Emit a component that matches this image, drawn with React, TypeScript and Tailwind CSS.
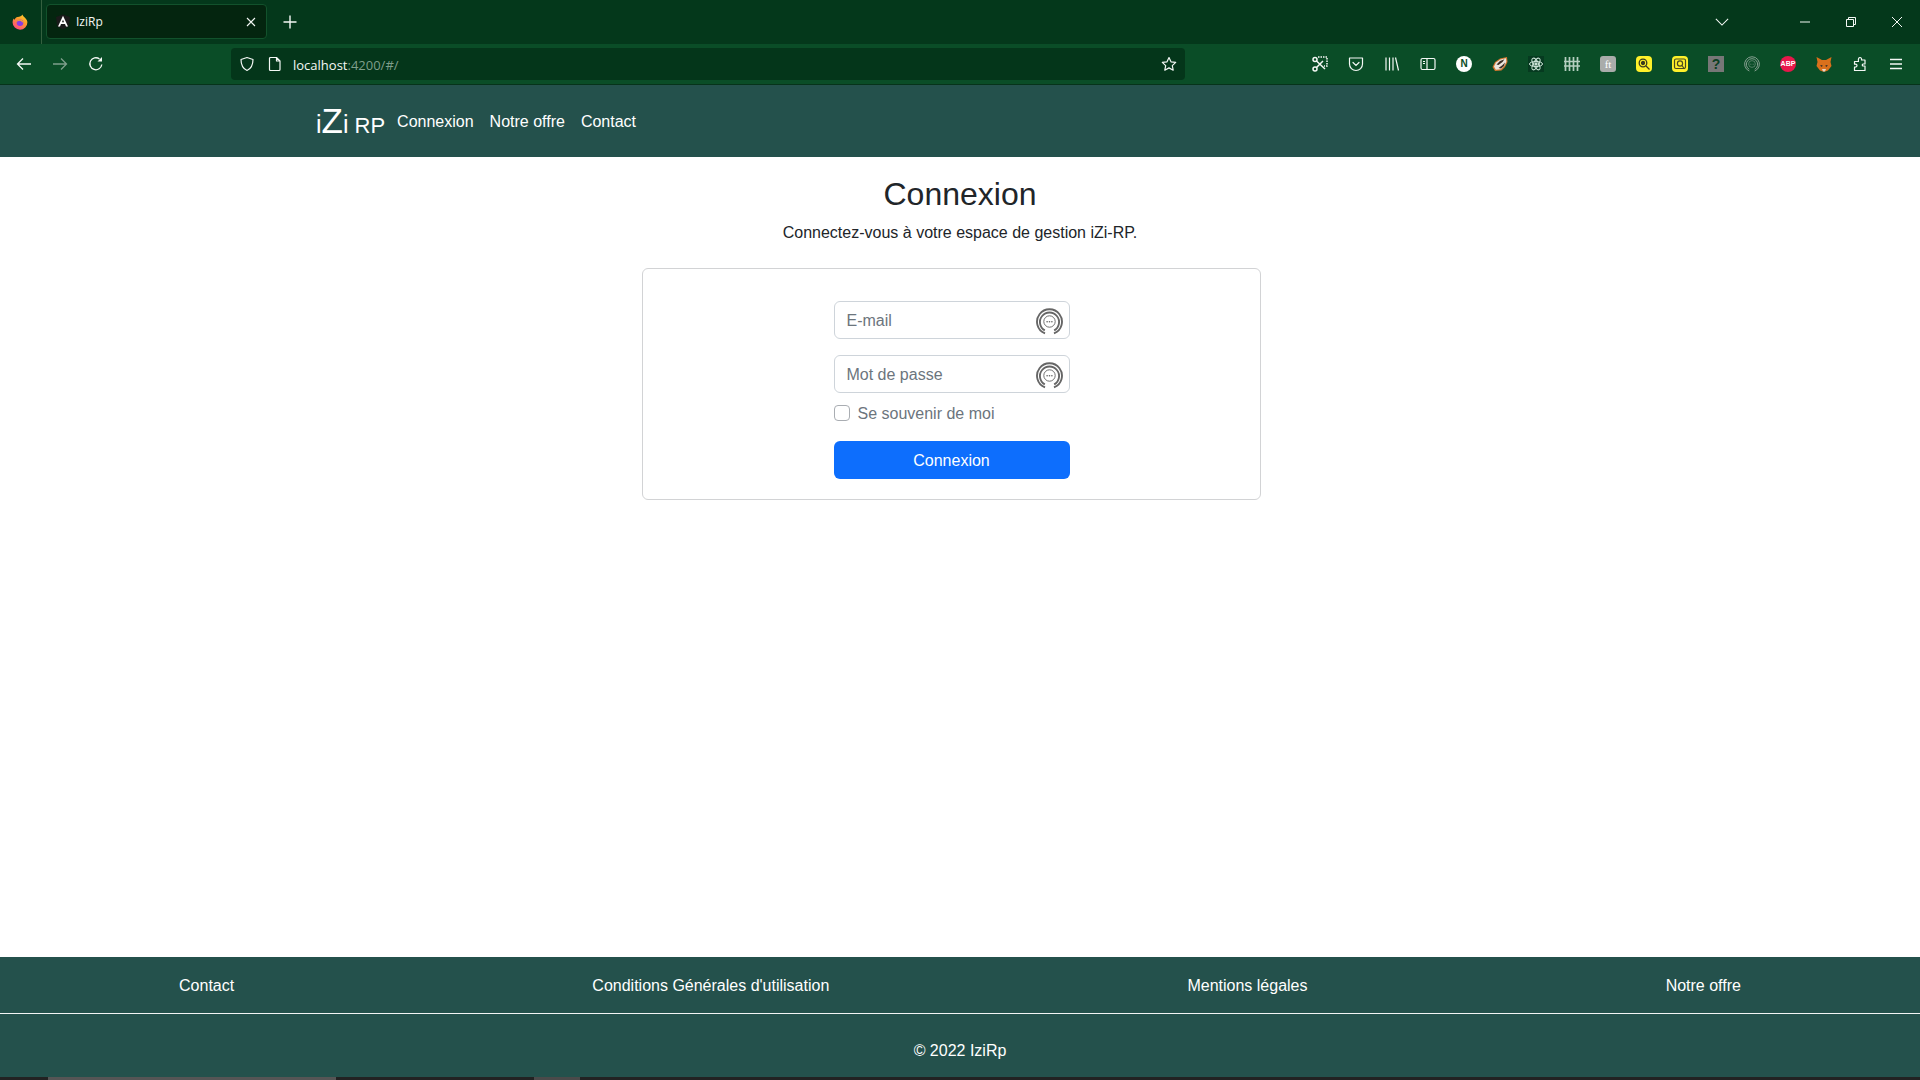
import type { ReactNode } from "react";

const lineIcon = "w-4 h-4 fill-none stroke-current";

function FirefoxLogo() {
  return (
    <svg viewBox="0 0 16 16" className="w-4 h-4">
      <defs>
        <linearGradient id="ff" x1="0.8" y1="0" x2="0.2" y2="1">
          <stop offset="0" stopColor="#ffd02e" />
          <stop offset="0.4" stopColor="#ff9a2b" />
          <stop offset="1" stopColor="#ff3f8a" />
        </linearGradient>
      </defs>
      <path d="M10.500.5c.3 1.600 1.300 2 2.500 3.200 1.500 1.500 2.400 3 2.400 4.600A7.400 7.400 0 0 1 .6 8.400c0-1.500.4-3 1.200-4 .1.600.4 1 .8 1.300.4-1.500 1.600-2.400 3-2.700C7.700 2.500 9.800 2.200 10.500.5z" fill="url(#ff)" />
      <circle cx="8" cy="8.800" r="3.300" fill="#8a3ce0" />
      <path d="M4.700 8.200c.8-1.400 3-1.900 4.500-1 1 .6 1.500 1.500 2.100 1.300-.3-2.300-2.200-3.300-3.900-3.100-1.600.2-2.800 1.300-2.700 2.800z" fill="#ffa52b" />
    </svg>
  );
}

function AngularLogo() {
  return (
    <svg viewBox="0 0 16 16" className="w-4 h-4">
      <path d="M8 .5 1 3l1.100 9.300L8 15.500l5.900-3.200L15 3z" fill="#1a1a1a" />
      <path d="M8 1.800 3 12.500h2l1-2.400h4l1 2.400h2zM6.900 8.300 8 5.700l1.100 2.600z" fill="#fff" />
    </svg>
  );
}

function HeadsetDots({ color, size, bold }: { color: string; size: string; bold?: boolean }) {
  const w = bold ? "1.800" : "1.500";
  return (
    <svg viewBox="0 0 26 26" className={size} fill="none" stroke={color}>
      <path d="M8.700 24.400A12 12 0 1 1 17.300 24.400" strokeWidth={w} />
      <path d="M8.500 21.600A9.200 9.200 0 1 1 17.500 21.600" strokeWidth={w} />
      <circle cx="13" cy="13" r="5.500" strokeWidth="0.900" />
      <circle cx="10.700" cy="13.200" r="0.800" fill={color} stroke="none" />
      <circle cx="13" cy="13.200" r="0.800" fill={color} stroke="none" />
      <circle cx="15.300" cy="13.200" r="0.800" fill={color} stroke="none" />
    </svg>
  );
}

function Slot({ children }: { children: ReactNode }) {
  return <div className="w-9 h-8 flex items-center justify-center text-[#f4f8f5]">{children}</div>;
}

function ExtensionIcons() {
  return (
    <div className="flex items-center">
      <Slot>
        <svg viewBox="0 0 16 16" className={lineIcon} strokeWidth="1.500">
          <path d="M6 1h9v9h-3" strokeDasharray="1.500 1" />
          <circle cx="3" cy="3.500" r="2" />
          <circle cx="3" cy="13" r="2" />
          <path d="M4.500 5 13 13M4.500 11.500 11 5" />
        </svg>
      </Slot>
      <Slot>
        <svg viewBox="0 0 16 16" className={lineIcon} strokeWidth="1.200">
          <path d="M1.500 2h13v6a6.500 6.500 0 0 1-13 0z" strokeLinejoin="round" />
          <path d="m5 6.500 3 3 3-3" strokeLinecap="round" />
        </svg>
      </Slot>
      <Slot>
        <svg viewBox="0 0 16 16" className={lineIcon} strokeWidth="1.200">
          <path d="M2 1.500v13M5.500 1.500v13M9 1.500v13M11.500 1.500l3 13" />
        </svg>
      </Slot>
      <Slot>
        <svg viewBox="0 0 16 16" className={lineIcon} strokeWidth="1.200">
          <rect x="1" y="2.500" width="14" height="11" rx="1.500" />
          <path d="M7 2.500v11M3 5.500h2M3 7.500h2" />
        </svg>
      </Slot>
      <Slot>
        <div className="w-4 h-4 rounded-full bg-white text-[#0a4d27] text-[10px] leading-4 font-bold text-center font-['Liberation_Sans',sans-serif]">N</div>
      </Slot>
      <Slot>
        <svg viewBox="0 0 16 16" className="w-4 h-4">
          <path d="M.5 11 3 6l5-3.500L15 1l.5 5-2.500 5-3.500 3.500-6.500.5z" fill="#d2762f" />
          <path d="M2 10.500 4 6.500l4.500-3L14 2.300l.3 3.500-2 4-3.500 3.500-5 .5z" fill="#ece6dc" />
          <path d="M4.500 8.500 8 5l4.500-1.800L10.500 6 6.500 9zM6.500 12l3.500-2.500 3-3-1 3.500-3 2.500z" fill="#3b3028" />
        </svg>
      </Slot>
      <Slot>
        <div className="w-4 h-4 bg-[#063a20] flex items-center justify-center">
          <svg viewBox="0 0 16 16" className="w-4 h-4 fill-none stroke-[#cfe6da]" strokeWidth="1">
            <ellipse cx="8" cy="8" rx="6.500" ry="2.600" />
            <ellipse cx="8" cy="8" rx="6.500" ry="2.600" transform="rotate(60 8 8)" />
            <ellipse cx="8" cy="8" rx="6.500" ry="2.600" transform="rotate(120 8 8)" />
            <circle cx="8" cy="8" r="1.200" fill="#cfe6da" />
          </svg>
        </div>
      </Slot>
      <Slot>
        <svg viewBox="0 0 16 16" className="w-4 h-4 fill-none stroke-[#b5cfc0]" strokeWidth="1.700">
          <path d="M1.500 1v14M5.500 1v14M9.500 1v14M13.500 1v14M0 5.500h16M0 10h16" />
        </svg>
      </Slot>
      <Slot>
        <div className="w-4 h-4 rounded-[3px] bg-[#a9acaa] text-white text-[11px] leading-4 text-center font-['Liberation_Serif',serif]">ft</div>
      </Slot>
      <Slot>
        <div className="w-4 h-4 rounded-[4px] bg-[#fff02a] flex items-center justify-center">
          <svg viewBox="0 0 16 16" className="w-4 h-4 fill-none stroke-[#3a3a20]" strokeWidth="1.300">
            <circle cx="7" cy="7" r="3.800" />
            <circle cx="7" cy="7" r="1.500" fill="#3a3a20" />
            <path d="m10 10 3.500 3.500" />
          </svg>
        </div>
      </Slot>
      <Slot>
        <div className="w-4 h-4 rounded-[4px] bg-[#fff02a] flex items-center justify-center">
          <svg viewBox="0 0 16 16" className="w-4 h-4 fill-none stroke-[#4a4a20]" strokeWidth="1.200">
            <rect x="2.500" y="3" width="11" height="9.500" rx="1.500" />
            <circle cx="8" cy="7.500" r="2.600" />
            <path d="m10 9.500 2.500 3.500" />
          </svg>
        </div>
      </Slot>
      <Slot>
        <div className="w-4 h-4 bg-[#777] text-[#0b3f22] text-sm leading-4 font-bold text-center font-['Liberation_Sans',sans-serif]">?</div>
      </Slot>
      <Slot>
        <HeadsetDots color="#8fa598" size="w-4 h-4" />
      </Slot>
      <Slot>
        <div className="w-4 h-4 rounded-full bg-[#e8174b] text-white text-[7px] leading-4 font-bold text-center font-['Liberation_Sans',sans-serif]">ABP</div>
      </Slot>
      <Slot>
        <svg viewBox="0 0 16 16" className="w-4 h-4">
          <path d="M.5 1 6 4h4l5.500-3-1 5 1 4-3.500 4.500-2.500 1h-3L4 14.500.500 10l1-4z" fill="#d9701c" />
          <path d="M4 9.500 6.500 9 6 11zM12 9.500 9.500 9l.5 2z" fill="#2b2b2b" />
          <path d="M6 13h4l-1 2.500H7z" fill="#e8d5c4" />
        </svg>
      </Slot>
      <Slot>
        <svg viewBox="0 0 16 16" className={lineIcon} strokeWidth="1.200">
          <path d="M8 1.500c1.200 0 1.800 1 1.500 2.500H13v4h-2c-1 0-1 2 0 2h2v4.500H2.500V11c1.500 .2 2.500-.5 2.500-1.500S4 8 2.500 8.200V5.500h4C6 3 6.800 1.500 8 1.500z" strokeLinejoin="round" />
        </svg>
      </Slot>
      <Slot>
        <svg viewBox="0 0 16 16" className={lineIcon} strokeWidth="1.300">
          <path d="M2 3.500h12M2 8h12M2 12.500h12" />
        </svg>
      </Slot>
    </div>
  );
}

function BrowserChrome() {
  return (
    <div className="font-['Open_Sans','Noto_Sans',sans-serif] text-[#f4f8f5]">
      <div className="h-11 bg-[#04381b] flex items-center">
        <div className="w-[40px] flex justify-center"><FirefoxLogo /></div>
        <div className="w-px h-11 ml-[1px] bg-[#35603f]" />
        <div className="ml-1 w-[221px] h-[35px] mt-[-1px] rounded-[4px] border border-[#12522c] bg-[#04250f] flex items-center pl-2 pr-[10px] text-xs">
          <AngularLogo />
          <span className="ml-[5px] pt-[1px] flex-1">IziRp</span>
          <svg viewBox="0 0 10 10" className="w-2.5 h-2.5 stroke-current" strokeWidth="1.100"><path d="m1 1 8 8M9 1l-8 8" /></svg>
        </div>
        <svg viewBox="0 0 14 14" className="ml-[16px] w-3.5 h-3.5 stroke-current" strokeWidth="1.400"><path d="M7 .5v13M.5 7h13" /></svg>
        <div className="flex-1" />
        <svg viewBox="0 0 16 10" className="w-3.5 h-2.5 fill-none stroke-current" strokeWidth="1.200"><path d="m1 1.500 7 7 7-7" /></svg>
        <div className="w-[71px]" />
        <svg viewBox="0 0 10 10" className="w-2.5 h-2.5 stroke-current"><path d="M0 5h10" /></svg>
        <div className="w-[36px]" />
        <svg viewBox="0 0 10 10" className="w-2.5 h-2.5 fill-none stroke-current"><path d="M.5 2.500h7v7h-7zM2.500 2.500v-2h7v7h-2" /></svg>
        <div className="w-[36px]" />
        <svg viewBox="0 0 10 10" className="w-2.5 h-2.5 stroke-current"><path d="m0 0 10 10M10 0 0 10" /></svg>
        <div className="w-[18px]" />
      </div>
      <div className="h-[41px] bg-[#0a4d27] border-b border-[#06331a] flex items-center">
        <div className="w-[6px]" />
        <Slot>
          <svg viewBox="0 0 16 16" className={lineIcon} strokeWidth="1.300"><path d="M15 8H1.500M7 2.500 1.500 8 7 13.500" /></svg>
        </Slot>
        <Slot>
          <svg viewBox="0 0 16 16" className="w-4 h-4 fill-none stroke-[#7f9f8c]" strokeWidth="1.300"><path d="M1 8h13.500M9 2.500 14.500 8 9 13.500" /></svg>
        </Slot>
        <Slot>
          <svg viewBox="0 0 16 16" className={lineIcon} strokeWidth="1.300"><path d="M13.800 8.500A6 6 0 1 1 11.500 3" /><path d="M14 1v4.500H9.500z" fill="currentColor" stroke="none" /></svg>
        </Slot>
        <div className="w-[117px]" />
        <div className="w-[954px] h-8 rounded-[4px] bg-[#04361a] flex items-center pl-[8px] pr-[8px] text-[13px]">
          <svg viewBox="0 0 16 16" className="w-4 h-4 fill-none stroke-current" strokeWidth="1.200"><path d="M8 1.500 2 3.500c0 5 1.500 9 6 11 4.500-2 6-6 6-11z" strokeLinejoin="round" /></svg>
          <svg viewBox="0 0 16 16" className="ml-[12px] w-4 h-4 fill-none stroke-current" strokeWidth="1.200"><path d="M3.500 1.500h6l3.500 3.500v8.500a1 1 0 0 1-1 1H3.500a1 1 0 0 1-1-1v-11a1 1 0 0 1 1-1zM9.500 1.500V5H13" strokeLinejoin="round" /></svg>
          <span className="ml-[10px] pt-[3px]">localhost<span className="text-[#7f9f8c]">:4200/#/</span></span>
          <div className="flex-1" />
          <svg viewBox="0 0 16 16" className="w-4 h-4 fill-none stroke-current" strokeWidth="1.200"><path d="m8 1.500 2 4.300 4.700.6-3.400 3.200.9 4.600L8 11.900l-4.200 2.300.9-4.600L1.300 6.400 6 5.800z" strokeLinejoin="round" /></svg>
        </div>
        <div className="flex-1" />
        <ExtensionIcons />
        <div className="w-[6px]" />
      </div>
    </div>
  );
}

function Header() {
  return (
    <header className="h-[72px] bg-[#24514c] text-white shrink-0">
      <div className="w-[1320px] mx-auto h-full pl-[16px] flex items-center">
        <div className="flex items-baseline font-light leading-none pb-[1px]">
          <span className="text-[25px]">i</span>
          <span className="text-[35px]">Z</span>
          <span className="text-[25px]">i</span>
          <span className="text-[22px] ml-[6px]">RP</span>
        </div>
        <nav className="ml-[12px] flex gap-4 text-base pt-[2px]">
          <a href="#/">Connexion</a>
          <a href="#/">Notre offre</a>
          <a href="#/">Contact</a>
        </nav>
      </div>
    </header>
  );
}

function Field({ placeholder, type }: { placeholder: string; type: string }) {
  return (
    <div className="relative">
      <input
        type={type}
        placeholder={placeholder}
        className="w-full h-[38px] rounded-md border border-[#ced4da] px-3 pt-[1px] text-base bg-white outline-none placeholder:text-[#6c757d]"
      />
      <span className="absolute right-[7px] top-[7px]">
        <HeadsetDots color="#666" size="w-[27px] h-[27px]" bold />
      </span>
    </div>
  );
}

function LoginCard() {
  return (
    <div className="flex justify-center pr-[17px]">
      <div className="w-[619px] h-[232px] rounded-md border border-[#d2d3d5] pt-[32px]">
        <form className="w-[236px] mx-auto flex flex-col">
          <Field placeholder="E-mail" type="email" />
          <div className="mt-4">
            <Field placeholder="Mot de passe" type="password" />
          </div>
          <label className="mt-2 h-6 flex items-center text-[#6c757d]">
            <input type="checkbox" className="appearance-none w-4 h-4 rounded-[4px] border border-[#a9adb2] bg-white" />
            <span className="ml-2 pt-[1px]">Se souvenir de moi</span>
          </label>
          <button type="button" className="mt-4 h-[38px] pt-[2px] rounded-md bg-[#0d6efd] text-white text-base">
            Connexion
          </button>
        </form>
      </div>
    </div>
  );
}

function Footer() {
  return (
    <footer className="h-[120px] bg-[#24514c] text-white shrink-0">
      <div className="h-[57px] pt-[1px] flex items-center justify-around border-b border-[#f3f5f5]">
        <a href="#/">Contact</a>
        <a href="#/">Conditions Générales d'utilisation</a>
        <a href="#/">Mentions légales</a>
        <a href="#/">Notre offre</a>
      </div>
      <p className="h-[63px] pt-[10px] flex items-center justify-center">© 2022 IziRp</p>
    </footer>
  );
}

export default function App() {
  return (
    <div className="h-screen overflow-hidden flex flex-col bg-white text-[#212529] font-['Liberation_Sans',Arial,sans-serif] text-base">
      <BrowserChrome />
      <Header />
      <main className="flex-1">
        <h1 className="mt-[18px] text-[32px] leading-[38px] text-center">Connexion</h1>
        <p className="mt-[8px] mb-[23px] leading-6 text-center">Connectez-vous à votre espace de gestion iZi-RP.</p>
        <LoginCard />
      </main>
      <Footer />
      <div className="h-[3px] bg-[#222] flex shrink-0">
        <div className="ml-[48px] w-[288px] bg-[#555]" />
        <div className="ml-[198px] w-[46px] bg-[#4a4a4a]" />
      </div>
    </div>
  );
}
